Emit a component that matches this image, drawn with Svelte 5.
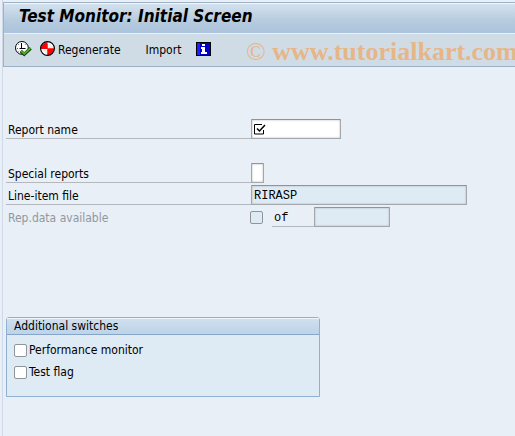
<script lang="ts">
  let reportName = $state('');
  let specialReports = $state('');
  let perfMonitor = $state(false);
  let testFlag = $state(false);
</script>

<div class="window">
  <header>
    <h1>Test Monitor: Initial Screen</h1>
    <div class="toolbar">
      <button class="tool execute" aria-label="Execute">
        <svg width="17" height="16" viewBox="0 0 17 16">
          <circle cx="6.9" cy="6.9" r="6.4" fill="#fff" stroke="#000" />
          <path d="M2 7.500h1M3.300 3.300l.7.7M10.500 3.300l-.7.7M3.500 10.500l.7-.7" stroke="#666" />
          <path d="M6.500 2v6M4.500 7.500h6" fill="none" stroke="#000" />
          <path d="M5.800 10l3.400 3.300L15.700 7.300" fill="none" stroke="#173c0b" stroke-width="3.2" />
          <path d="M6.100 9.900l3.100 2.900L15.400 7.200" fill="none" stroke="#58b82e" stroke-width="1.800" />
        </svg>
      </button>
      <button class="tool regenerate">
        <svg width="16" height="16" viewBox="0 0 16 16">
          <circle cx="7.5" cy="7.5" r="7" fill="#fff" />
          <path d="M7.500 3v4.500H1v-1L2.500 3.500zM7.500 7.500V14l4-1.500 2.500-5z" fill="#f00" />
          <path d="M7.500 1v7H1a7 7 0 0 1 6.500-7zM7.500 7.500H14a7 7 0 0 1-6.500 7z" fill="#f00" />
          <path d="M10 3v4M12 5v2M4 10h3M5 12h2" stroke="#ffdada" />
          <circle cx="7.5" cy="7.5" r="6.9" fill="none" stroke="#000" stroke-width="1.2" />
        </svg>
        <span>Regenerate</span>
      </button>
      <button class="tool import"><span>Import</span></button>
      <button class="tool" aria-label="Information">
        <svg width="15" height="14" viewBox="0 0 15 14" shape-rendering="crispEdges">
          <rect width="15" height="14" fill="#000" />
          <rect x="1" y="1" width="13" height="12" fill="#0000c8" />
          <rect x="1" y="1" width="3" height="12" fill="#2020ff" />
          <path d="M6 2h3v2H6zM5 5h4v5h2v2H5v-2h1V7H5z" fill="#fff" />
        </svg>
      </button>
    </div>
    <span class="watermark"><span class="copy">©</span> www.tutorialkart.com</span>
  </header>

  <main>
    <div class="row">
      <label for="report">Report name</label>
      <div class="required">
        <input id="report" class="field name" type="text" required bind:value={reportName} />
        {#if !reportName}
          <svg class="mark" width="12" height="11" viewBox="0 0 12 11">
            <path d="M8 .5H.5v9.500H9.500V6" fill="none" stroke="#000" />
            <path d="M3 4.500l2.500 2.500L11 1" fill="none" stroke="#000" stroke-width="1.500" />
          </svg>
        {/if}
      </div>
    </div>
    <div class="row spaced">
      <label for="special">Special reports</label>
      <input id="special" class="field single" type="text" maxlength="1" bind:value={specialReports} />
    </div>
    <div class="row">
      <label for="lineitem">Line-item file</label>
      <input id="lineitem" class="field file" type="text" value="RIRASP" readonly />
    </div>
    <div class="row">
      <label class="disabled" for="repdata">Rep.data available</label>
      <input id="repdata" class="check" type="checkbox" disabled />
      <label class="of" for="total">of</label>
      <input id="total" class="field total" type="text" readonly />
    </div>

    <fieldset>
      <legend>Additional switches</legend>
      <label class="switch"><input class="check" type="checkbox" bind:checked={perfMonitor} />Performance monitor</label>
      <label class="switch"><input class="check" type="checkbox" bind:checked={testFlag} />Test flag</label>
    </fieldset>
  </main>
</div>

<style>
  :global(body) {
    background: #e8eff6;
  }

  .window {
    box-sizing: border-box;
    min-height: 100vh;
    margin-left: 2px;
    padding-top: 2px;
    border-left: 1px solid #d0d9e7;
    font-family: 'DejaVu Sans Condensed', 'DejaVu Sans', sans-serif;
    font-size: 12px;
    color: #000;
  }

  header {
    position: relative;
    overflow: hidden;
    border: solid #9db1c6;
    border-width: 1px 0 1px 1px;
    background: #cfdce6;
  }

  h1 {
    margin: 0;
    padding-left: 15px;
    border-top: 1px solid #f0f6fb;
    border-bottom: 1px solid #eaf2f8;
    background: linear-gradient(#d4e1ed, #b5cbde 60%, #abc3dc);
    font-size: 17px;
    font-style: italic;
    font-weight: bold;
    line-height: 24px;
    height: 29px;
    white-space: nowrap;
  }

  .toolbar {
    display: flex;
    align-items: center;
    height: 30px;
    padding: 0 0 2px 11px;
  }

  .tool {
    display: flex;
    align-items: center;
    gap: 2px;
    padding: 0;
    border: 0;
    background: none;
    font: inherit;
    color: inherit;
    cursor: pointer;
  }

  .tool span {
    padding-top: 2px;
  }

  .execute {
    margin-right: 8px;
  }

  .regenerate {
    margin-right: 25px;
  }

  .import {
    margin-right: 15px;
  }

  .watermark {
    position: absolute;
    left: 242px;
    top: 34px;
    font-family: 'Liberation Serif', serif;
    font-size: 26px;
    font-weight: bold;
    line-height: 30px;
    color: #e6b688;
    white-space: nowrap;
    pointer-events: none;
  }

  .copy {
    font-weight: normal;
  }

  main {
    padding: 52px 3px 0;
  }

  .row {
    display: flex;
    align-items: flex-end;
    height: 20px;
    margin-bottom: 2px;
  }

  .spaced {
    margin-top: 24px;
  }

  .row > label {
    box-sizing: border-box;
    width: 245px;
    height: 20px;
    padding-left: 2px;
    border-bottom: 1px solid #b4b8bc;
    line-height: 22px;
  }

  .row > .disabled {
    width: 244px;
    border-bottom: 0;
    color: #92979e;
  }

  .row > .of {
    width: 42px;
    margin-left: 9px;
    font-family: 'Liberation Mono', monospace;
  }

  .required {
    position: relative;
  }

  .mark {
    position: absolute;
    left: 3px;
    top: 5px;
    pointer-events: none;
  }

  .field {
    display: block;
    box-sizing: border-box;
    height: 20px;
    margin: 0;
    padding: 1px 2px 0;
    border: 1px solid #a3a7ab;
    border-top-color: #8f9498;
    border-radius: 1px;
    outline: 0;
    background: #fff;
    box-shadow: inset 0 0 2px #a8adb2;
    font-family: 'Liberation Mono', monospace;
    font-size: 12px;
    color: #000;
  }

  .field:read-only {
    background: #deebf5;
  }

  .name {
    width: 90px;
  }

  .single {
    width: 13px;
    padding: 0 1px;
  }

  .file {
    width: 216px;
  }

  .total {
    width: 76px;
  }

  .check {
    appearance: none;
    flex: none;
    box-sizing: border-box;
    width: 13px;
    height: 13px;
    margin: 0;
    border: 1px solid #8f9599;
    border-radius: 2px;
    background: #fff;
  }

  .check:checked {
    box-shadow: inset 0 0 0 2px #fff;
    background: #333;
  }

  .check:disabled {
    background: #deebf5;
  }

  .row > .check {
    margin-bottom: 3px;
  }

  fieldset {
    box-sizing: border-box;
    max-width: 314px;
    min-height: 80px;
    margin: 90px 0 0;
    padding: 0;
    border: 1px solid #8fb0d0;
    border-radius: 3px 3px 0 0;
    background: #deeaf4;
  }

  legend {
    float: left;
    box-sizing: border-box;
    width: 100%;
    height: 17px;
    margin-bottom: 4px;
    padding: 0 7px;
    border-top: 1px solid #eef5fb;
    border-bottom: 1px solid #86a5c8;
    background: linear-gradient(#cfdfed, #bdd3e9);
    line-height: 15px;
  }

  .switch {
    clear: both;
    display: flex;
    align-items: center;
    gap: 2px;
    height: 22px;
    padding-left: 7px;
  }
</style>
